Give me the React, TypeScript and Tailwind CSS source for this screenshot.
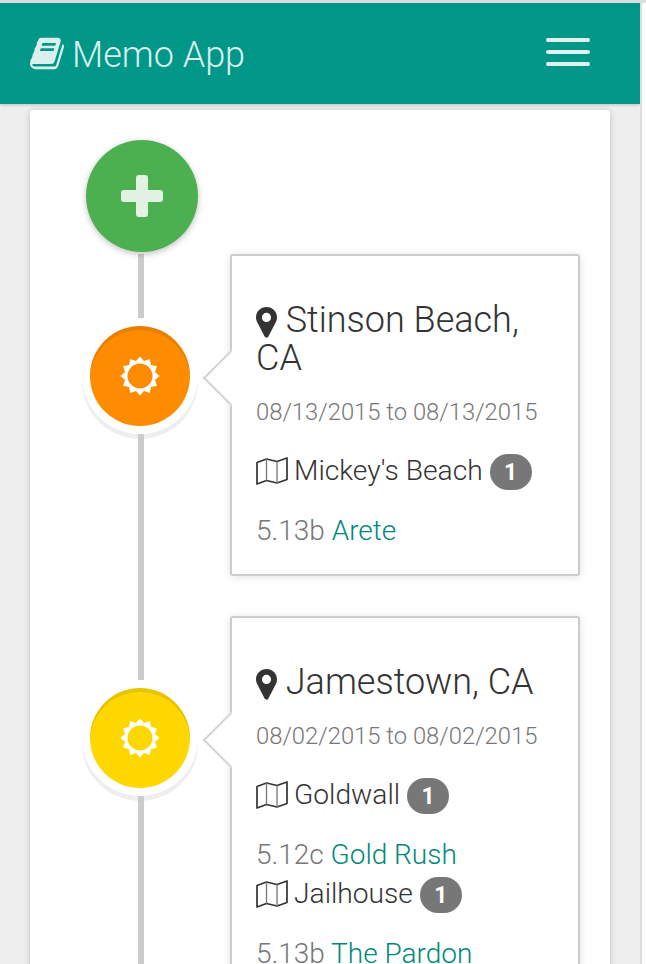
import type { ReactNode } from 'react'

function BookIcon() {
  return (
    <svg viewBox="0 0 1664 1792" className="w-[34px] h-[37px]" fill="currentColor" aria-hidden="true">
      <path d="M1639 478q40 57 18 129l-275 906q-19 64-76.500 107.500t-122.500 43.500h-923q-77 0-148.500-53.500t-99.500-131.500q-24-67-2-127 0-4 3-27t4-37q1-8-3-21.500t-3-19.500q2-11 8-21t16.500-23.500 16.500-23.500q23-38 45-91.500t30-91.500q3-10 .5-30t-.5-28q3-11 17-28t17-23q21-36 42-92t25-90q1-9-2.500-32t.5-28q4-13 22-30.500t22-22.500q19-26 42.500-84.500t27.500-96.500q1-8-3-25.500t-2-26.500q2-8 9-18t18-23 17-21q8-12 16.500-30.500t15-35 16-36 19.500-32 26.500-23.500 36-11.500 47.500 5.500l-1 3q38-9 51-9h761q74 0 114 56t18 130l-274 906q-36 119-71.500 153.500t-128.500 34.500h-869q-27 0-38 15-11 16-1 43 24 70 144 70h923q29 0 56-15.500t35-41.500l300-987q7-22 5-57 38 15 59 43zm-1064 2q-4 13 2 22.500t20 9.500h608q13 0 25.500-9.500t16.500-22.500l21-64q4-13-2-22.500t-20-9.500h-608q-13 0-25.500 9.500t-16.500 22.500zm-83 256q-4 13 2 22.500t20 9.500h608q13 0 25.500-9.500t16.500-22.500l21-64q4-13-2-22.500t-20-9.500h-608q-13 0-25.500 9.500t-16.500 22.500z" />
    </svg>
  )
}

function PinIcon() {
  return (
    <svg viewBox="0 0 21 31" className="w-[21px] h-[31px] shrink-0 inline-block" fill="#333333" aria-hidden="true">
      <path fillRule="evenodd" d="M10.5 0C4.7 0 0 4.600 0 10.400c0 1.600.4 3 1 4.300l7.600 14.900c.8 1.600 3 1.600 3.800 0L20 14.700c.6-1.300 1-2.700 1-4.300C21 4.600 16.300 0 10.500 0zm0 15a4.600 4.600 0 1 1 0-9.200 4.600 4.600 0 0 1 0 9.200z" />
    </svg>
  )
}

function MapIcon() {
  return (
    <svg viewBox="0 0 32 28" className="w-[32px] h-[28px] shrink-0 -mt-[2px]" fill="none" stroke="#333333" strokeLinejoin="round" aria-hidden="true">
      <path strokeWidth="1.7" d="M1 5.500 10.500 2 21 4.500 31 1v21.500L21 26l-10.500-2.500L1 27z" />
      <path strokeWidth="1.300" stroke="#777777" d="M10.500 2v21.500M21 4.500V26" />
    </svg>
  )
}

// 12 pointed star with a round hole
function SunIcon() {
  const points = Array.from({ length: 24 }, (_, i) => {
    const r = i % 2 === 0 ? 19.5 : 15.5
    const a = (i * Math.PI) / 12
    return `${(20 + r * Math.sin(a)).toFixed(2)} ${(20 - r * Math.cos(a)).toFixed(2)}`
  })
  const d = `M${points.join('L')}Z M20 7.500a12.500 12.500 0 1 0 0 25a12.500 12.500 0 1 0 0-25Z`
  return (
    <svg viewBox="0 0 40 40" className="w-[40px] h-[40px]" fill="#ffffff" aria-hidden="true">
      <path fillRule="evenodd" d={d} />
    </svg>
  )
}

function Badge() {
  return (
    <span className="ml-[7px] inline-flex items-center justify-center w-[42px] h-[36px] rounded-full bg-[#777777] text-white text-[23px] font-bold leading-none">
      1
    </span>
  )
}

function Crag({ name }: { name: string }) {
  return (
    <div className="flex items-center h-[36px]">
      <MapIcon />
      <span className="ml-[6px] -mt-[1px] text-[28.2px] font-light text-[#333333]">{name}</span>
      <Badge />
    </div>
  )
}

function Route({ grade, name }: { grade: string; name: string }) {
  return (
    <p className="text-[28px] font-light leading-[40px] text-[#777777] whitespace-nowrap">
      {grade} <span className="text-[#00897b]">{name}</span>
    </p>
  )
}

function Marker({ color }: { color: string }) {
  return (
    <div className="relative -ml-[2px] w-[116px] h-[116px] rounded-full bg-white shadow-[0_5px_0_#eeeeee] flex items-center justify-center">
      <div className={`w-[100px] h-[100px] rounded-full flex items-center justify-center shadow-[inset_0_4px_0_rgba(0,0,0,0.09)] ${color}`}>
        <SunIcon />
      </div>
      {/* line runs over the ring's shadow */}
      <div className="absolute left-[56px] top-full w-[6px] h-[5px] bg-[#cccccc]" />
    </div>
  )
}

function Card({ className, children }: { className: string; children: ReactNode }) {
  return (
    <article className={`relative ml-[34px] w-[350px] rounded-[3px] bg-white border-2 border-[#cccccc] pl-[24px] pr-[24px] pt-[45px] shadow-[0_1px_8px_rgba(0,0,0,0.12)] ${className}`}>
      <div className="absolute left-[-21px] top-[102px] w-[40px] h-[40px] rotate-45 bg-white border-b-2 border-l-2 border-[#d4d4d4]" />
      <div className="relative">{children}</div>
    </article>
  )
}

function Dates({ children }: { children: ReactNode }) {
  return <p className="mt-[18px] text-[23.8px] font-light leading-[34px] text-[#777777] whitespace-nowrap">{children}</p>
}

export default function App() {
  return (
    <div className="h-[964px] w-[646px] overflow-hidden bg-white font-['Roboto',sans-serif]">
      <div className="h-[3px] w-full bg-[#dddddd]" />
      <div className="w-[642px] h-[961px] bg-[#eeeeee] border-r-2 border-[#dddddd] overflow-hidden">
        <nav className="h-[101px] bg-[#009688] flex items-center justify-between pl-[30px] pr-[50px] shadow-[0_1px_3px_rgba(0,0,0,0.2)] relative z-10 text-[#d9f0ec]">
          <div className="flex items-center gap-[8px]">
            <BookIcon />
            <span className="text-[36px] font-light leading-none mt-[2px]">Memo App</span>
          </div>
          <div className="flex flex-col gap-[8px] mb-[3px]">
            <span className="block w-[44px] h-[4px] rounded-sm bg-[#e0f2ef]" />
            <span className="block w-[44px] h-[4px] rounded-sm bg-[#e0f2ef]" />
            <span className="block w-[44px] h-[4px] rounded-sm bg-[#e0f2ef]" />
          </div>
        </nav>

        <main className="relative mt-[6px] ml-[30px] w-[580px] h-[900px] rounded bg-white shadow-[0_1px_6px_rgba(0,0,0,0.2)] pl-[54px] pt-[30px]">
          {/* timeline line */}
          <div className="absolute left-[108px] top-[144px] bottom-0 w-[6px] bg-[#cccccc]" />

          <div className="relative ml-[2px] w-[112px] h-[112px] rounded-full bg-[#4caf50] flex items-center justify-center shadow-[0_2px_6px_rgba(0,0,0,0.25)]">
            <span className="relative block w-[42px] h-[42px]">
              <span className="absolute left-[15px] top-0 w-[12px] h-[42px] rounded-[3px] bg-[#e2f3e3]" />
              <span className="absolute left-0 top-[15px] w-[42px] h-[12px] rounded-[3px] bg-[#e2f3e3]" />
            </span>
          </div>

          <div className="relative mt-[2px] flex items-start">
            <div className="relative w-[112px] mt-[64px] shrink-0">
              <Marker color="bg-[#ff8c00]" />
            </div>
            <Card className="h-[322px]">
              <h2 className="text-[36px] font-light leading-[38px] text-[#333333]">
                <PinIcon /> Stinson Beach, CA
              </h2>
              <Dates>08/13/2015 to 08/13/2015</Dates>
              <div className="mt-[25px]"><Crag name="Mickey's Beach" /></div>
              <div className="mt-[21px]"><Route grade="5.13b" name="Arete" /></div>
            </Card>
          </div>

          <div className="relative mt-[40px] flex items-start">
            <div className="relative w-[112px] mt-[64px] shrink-0">
              <Marker color="bg-[#ffd700]" />
            </div>
            <Card className="h-[400px]">
              <h2 className="text-[36px] font-light leading-[38px] text-[#333333] whitespace-nowrap">
                <PinIcon /> Jamestown, CA
              </h2>
              <Dates>08/02/2015 to 08/02/2015</Dates>
              <div className="mt-[25px]"><Crag name="Goldwall" /></div>
              <div className="mt-[21px]"><Route grade="5.12c" name="Gold Rush" /></div>
              <div className="mt-[2px]"><Crag name="Jailhouse" /></div>
              <div className="mt-[21px]"><Route grade="5.13b" name="The Pardon" /></div>
            </Card>
          </div>
        </main>
      </div>
    </div>
  )
}
